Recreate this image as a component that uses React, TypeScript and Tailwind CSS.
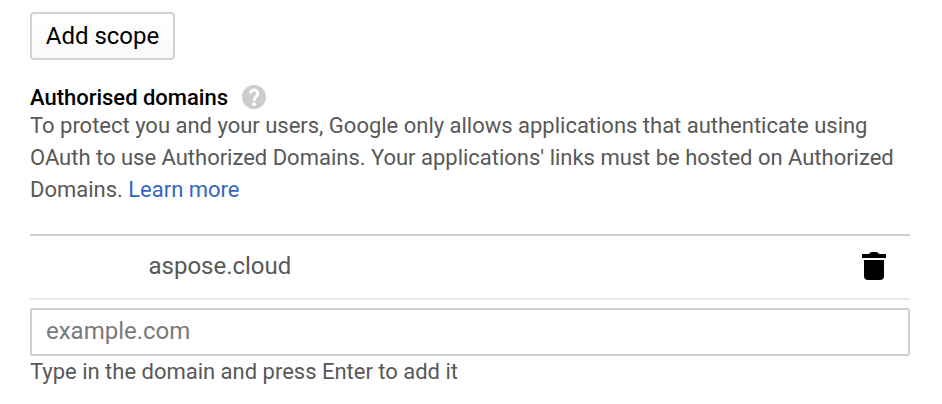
export default function App() {
  return (
    <main className="flex h-[404px] w-[942px] flex-col items-start overflow-hidden bg-white px-[30px] pt-3 font-[Roboto,sans-serif] text-[22px] leading-8 tracking-[-0.01px] text-[#585858]">
      <button className="flex h-12 w-[145px] items-center justify-center rounded-[4px] border-2 border-[#d2d2d2] bg-linear-to-b from-white to-[#f9f9f9] text-[24px] leading-7 text-black">
        Add scope
      </button>
      <div className="mt-6 flex h-[26px] items-center gap-[14px]">
        <h2 className="pt-0.5 text-[22px] leading-7 font-medium whitespace-nowrap text-black">Authorised domains</h2>
        <svg className="size-6" viewBox="0 0 24 24">
          <circle cx="12" cy="12" r="12" fill="#ccc" />
          <path d="M8.3 8.6a3.7 3.7 0 1 1 6.5 2.4c-1.3 1.5-2.8 1.9-2.8 4.8" fill="none" stroke="#fff" strokeWidth="2.8" />
          <circle cx="12" cy="19.2" r="1.9" fill="#fff" />
        </svg>
      </div>
      <p className="whitespace-nowrap">
        To protect you and your users, Google only allows applications that authenticate using<br />
        OAuth to use Authorized Domains. Your applications' links must be hosted on Authorized<br />
        Domains. <a className="text-[#3367c8]">Learn more</a>
      </p>
      <div className="mt-7 flex h-[66px] w-[880px] items-center justify-between border-t-2 border-b-2 border-t-[#d0d0d0] border-b-[#e8e8e8] pr-6 pb-0.5 pl-[118.5px]">
        <span className="text-[24px]">aspose.cloud</span>
        <svg className="h-7 w-6" viewBox="0 0 24 28" fill="#000">
          <path d="M0 2h7q1-2 3-2h4q2 0 3 2h7v4H0zM2 8h20v16a4 4 0 0 1-4 4H6a4 4 0 0 1-4-4z" />
        </svg>
      </div>
      <input className="mt-2 h-12 w-[880px] rounded-[2px] border-2 border-[#d0d0d0] px-[14px] pb-0.5 text-[24px] outline-none placeholder:text-[#7a7a7a]" placeholder="example.com" />
      <p className="whitespace-nowrap">Type in the domain and press Enter to add it</p>
    </main>
  );
}
